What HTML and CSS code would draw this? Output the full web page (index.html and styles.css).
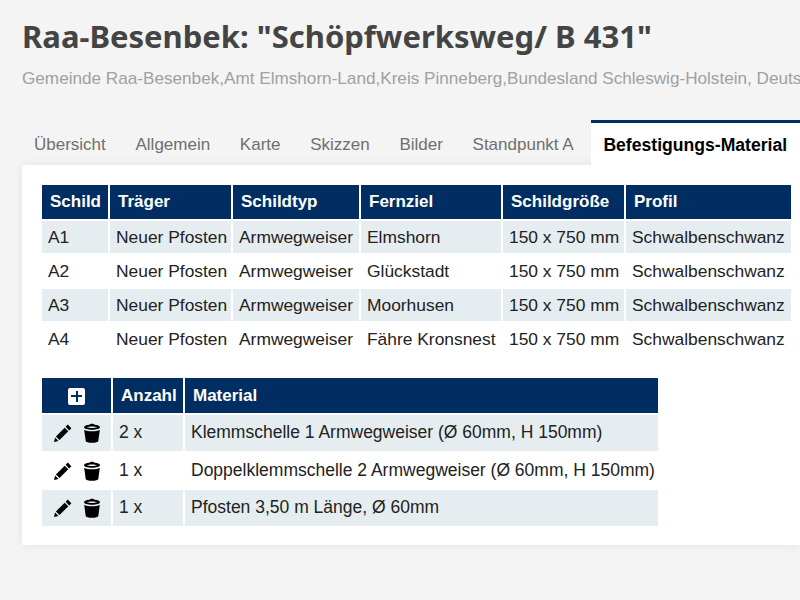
FILE: index.html
```html
<!DOCTYPE html>
<html lang="de">
<head>
<meta charset="utf-8">
<title>Raa-Besenbek</title>
<link rel="stylesheet" href="styles.css">
</head>
<body>
<svg class="defs" width="0" height="0">
  <symbol id="pen" viewBox="0 0 18 18"><path d="M13.800.6l3.600 3.600-2.200 2.200-3.600-3.600zM10.700 3.700l3.600 3.600-8.800 8.800-3.600-3.600zM1.100 13.500l3.400 3.400-4.500 1.100z" fill="#000"/></symbol>
  <symbol id="trash" viewBox="0 0 18 20"><path d="M6.500 1.800C7 .4 11 .4 11.500 1.800c3 .3 5.500 1.100 5.500 2.400 0 1.500-3.600 2.500-8 2.500S1 5.700 1 4.200c0-1.300 2.500-2.100 5.500-2.400zM4 4.300c1 .5 2.800.7 5 .7s4-.2 5-.7c-1-.5-2.800-.8-5-.8s-4 .3-5 .8z" fill="#000"/><path d="M1.200 7c1.800.9 4.900 1.200 7.800 1.200s6-.3 7.800-1.200L15.300 18c-.1 1-3.100 1.800-6.300 1.800S2.800 19 2.700 18z" fill="#000"/></symbol>
</svg>
<header class="head">
  <h1 class="title">Raa-Besenbek: "Schöpfwerksweg/ B 431"</h1>
  <p class="sub">Gemeinde Raa-Besenbek,Amt Elmshorn-Land,Kreis Pinneberg,Bundesland Schleswig-Holstein, Deutschland</p>
</header>
<nav class="tabs">
  <a class="tab">Übersicht</a>
  <a class="tab">Allgemein</a>
  <a class="tab">Karte</a>
  <a class="tab">Skizzen</a>
  <a class="tab">Bilder</a>
  <a class="tab">Standpunkt A</a>
  <a class="tab active">Befestigungs-Material</a>
</nav>
<main class="card">
  <table class="grid signs">
    <colgroup><col class="c1"><col class="c2"><col class="c3"><col class="c4"><col class="c5"><col class="c6"></colgroup>
    <thead><tr><th>Schild</th><th>Träger</th><th>Schildtyp</th><th>Fernziel</th><th>Schildgröße</th><th>Profil</th></tr></thead>
    <tbody>
      <tr><td>A1</td><td>Neuer Pfosten</td><td>Armwegweiser</td><td>Elmshorn</td><td>150 x 750 mm</td><td>Schwalbenschwanz</td></tr>
      <tr><td>A2</td><td>Neuer Pfosten</td><td>Armwegweiser</td><td>Glückstadt</td><td>150 x 750 mm</td><td>Schwalbenschwanz</td></tr>
      <tr><td>A3</td><td>Neuer Pfosten</td><td>Armwegweiser</td><td>Moorhusen</td><td>150 x 750 mm</td><td>Schwalbenschwanz</td></tr>
      <tr><td>A4</td><td>Neuer Pfosten</td><td>Armwegweiser</td><td>Fähre Kronsnest</td><td>150 x 750 mm</td><td>Schwalbenschwanz</td></tr>
    </tbody>
  </table>
  <table class="grid mats">
    <colgroup><col class="m1"><col class="m2"><col class="m3"></colgroup>
    <thead><tr><th class="center"><span class="plus"></span></th><th>Anzahl</th><th>Material</th></tr></thead>
    <tbody>
      <tr><td class="acts"><svg class="pen"><use href="#pen"/></svg><svg class="trash"><use href="#trash"/></svg></td><td>2 x</td><td>Klemmschelle 1 Armwegweiser (Ø 60mm, H 150mm)</td></tr>
      <tr><td class="acts"><svg class="pen"><use href="#pen"/></svg><svg class="trash"><use href="#trash"/></svg></td><td>1 x</td><td>Doppelklemmschelle 2 Armwegweiser (Ø 60mm, H 150mm)</td></tr>
      <tr><td class="acts"><svg class="pen"><use href="#pen"/></svg><svg class="trash"><use href="#trash"/></svg></td><td>1 x</td><td>Pfosten 3,50 m Länge, Ø 60mm</td></tr>
    </tbody>
  </table>
</main>
</body>
</html>
```
FILE: styles.css
```css
html, body { margin: 0; height: 600px; overflow: hidden; }
body { background: #f4f4f4; font-family: "Liberation Sans", Arial, sans-serif; color: #222; width: 800px; }
.defs { position: absolute; }
.head { padding: 17px 0 0 22px; }
.title { margin: 0; font-family: "Noto Sans", sans-serif; font-weight: 700; font-size: 31px; line-height: 38px; color: #444; white-space: nowrap; }
.sub { margin: 13px 0 0; font-size: 17.150px; line-height: 20px; color: #a0a0a0; white-space: nowrap; }
.tabs { display: flex; margin: 32px 0 0 22px; height: 45px; white-space: nowrap; }
.tab { padding: 15px 12px 0; margin-right: 5.700px; font-size: 17px; line-height: 20px; color: #6f6f6f; }
.tabs .active { margin: 0; padding: 12px 12px 0; background: #fff; border-top: 3px solid #002e62; color: #000; font-weight: 700; font-size: 17.600px; flex: 1; }
.card { margin-left: 22px; width: 778px; height: 380px; box-sizing: border-box; background: #fff; padding: 18px 0 0 18px; box-shadow: 0 0 10px rgba(0,0,0,.08); }
.grid { border-collapse: separate; border-spacing: 2px; table-layout: fixed; font-size: 17.400px; }
.grid th { background: #002e62; color: #fff; font-weight: 700; font-size: 17px; text-align: left; padding: 0 0 0 8px; }
.signs { width: 753px; }
.signs th { height: 34px; }
.signs td { height: 32px; padding: 0 0 0 6px; color: #222; }
.signs tbody tr:nth-child(odd) td, .mats tbody tr:nth-child(odd) td { background: #e6edf0; }
.c1 { width: 66px; } .c2 { width: 121px; } .c3 { width: 126px; } .c4 { width: 140px; } .c5 { width: 121px; } .c6 { width: 165px; }
.mats { width: 620px; margin-top: 19px; font-size: 17.500px; }
.mats th { height: 35px; }
.mats td { height: 35.500px; padding: 0 0 0 6px; color: #222; }
.m1 { width: 69px; } .m2 { width: 70px; } .m3 { width: 473px; }
.grid th.center { text-align: center; padding: 0; }
.plus { display: inline-block; width: 17px; height: 17px; border-radius: 2px; background: #fff; position: relative; vertical-align: middle; }
.plus::before { content: ""; position: absolute; left: 3px; top: 7.500px; width: 11px; height: 2px; background: #002e62; }
.plus::after { content: ""; position: absolute; left: 7.500px; top: 3px; width: 2px; height: 11px; background: #002e62; }
.acts { white-space: nowrap; }
.mats td.acts { padding: 0 0 0 12px; }
.pen { width: 18px; height: 18px; vertical-align: middle; }
.trash { width: 18px; height: 20px; margin-left: 11px; vertical-align: middle; }
```
